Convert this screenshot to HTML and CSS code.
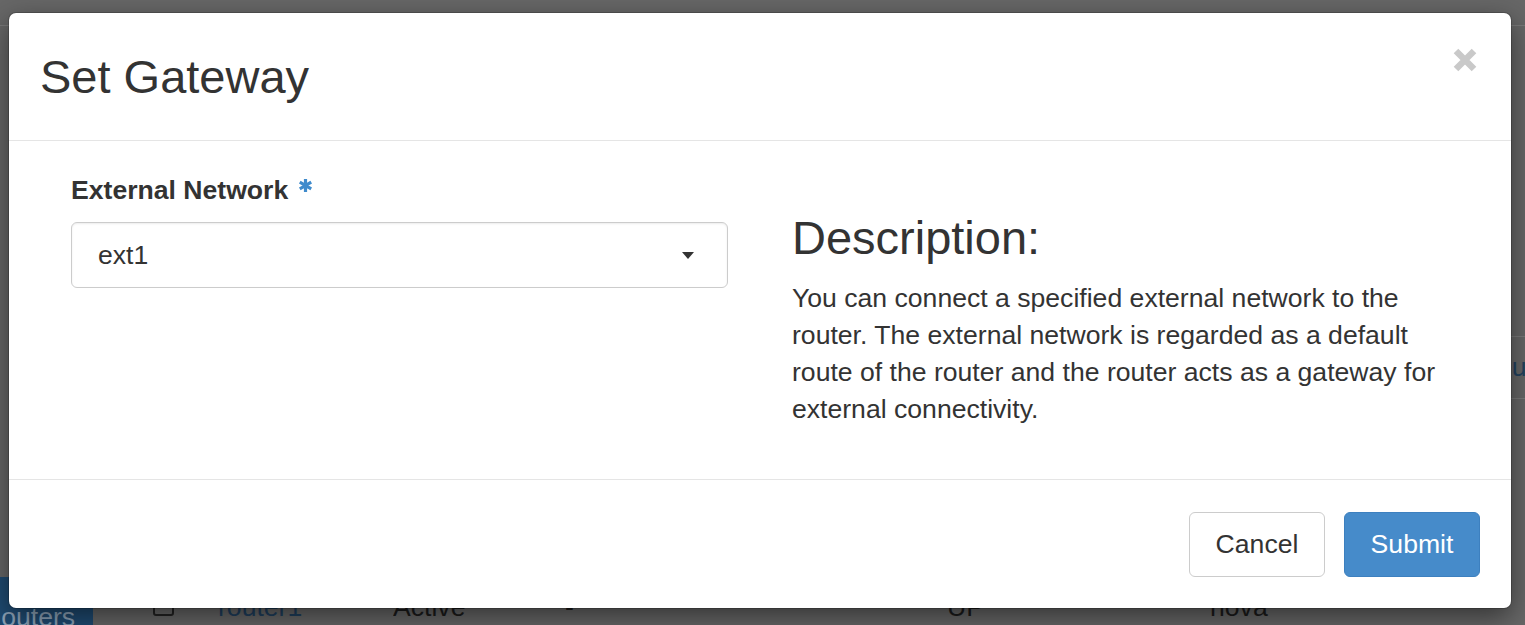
FILE: index.html
```html
<!DOCTYPE html>
<html lang="en">
<head>
<meta charset="utf-8">
<title>Set Gateway</title>
<link rel="stylesheet" href="styles.css">
</head>
<body>
<div class="page">
  <div class="topbar"></div>
  <div class="main">
    <aside class="sidebar">
      <div class="nav-active">Routers</div>
    </aside>
    <section class="content">
      <div class="thead">
        <div></div><div></div><div></div><div></div><div></div><div></div><div class="th-link">Outputs</div>
      </div>
      <div class="trow">
        <div class="cell-check"><span class="checkbox"></span></div>
        <div class="link">router1</div>
        <div>Active</div>
        <div>-</div>
        <div>UP</div>
        <div>nova</div>
        <div></div>
      </div>
    </section>
  </div>
</div>

<div class="modal">
  <div class="modal-header">
    <h3 class="modal-title">Set Gateway</h3>
    <button class="close" aria-label="Close">
      <svg width="26" height="26" viewBox="0 0 26 26"><path d="M4 4 L22 22 M22 4 L4 22" stroke="#c9c9c9" stroke-width="6.5" stroke-linecap="butt" fill="none"/></svg>
    </button>
  </div>
  <div class="modal-body">
    <div class="col">
      <label class="field-label">External Network<svg class="req" width="15" height="15" viewBox="0 0 16 16"><path d="M8 1 V15 M1.9 4.5 L14.1 11.5 M14.1 4.5 L1.9 11.5" stroke="#3f8bcc" stroke-width="3.4" fill="none"/></svg></label>
      <div class="select"><span>ext1</span><span class="caret"></span></div>
    </div>
    <div class="col">
      <h3 class="desc-title">Description:</h3>
      <p class="desc">You can connect a specified external network to the router. The external network is regarded as a default route of the router and the router acts as a gateway for external connectivity.</p>
    </div>
  </div>
  <div class="modal-footer">
    <button class="btn btn-default">Cancel</button>
    <button class="btn btn-primary">Submit</button>
  </div>
</div>
</body>
</html>
```
FILE: styles.css
```css
* { box-sizing: border-box; }
html, body { margin: 0; padding: 0; }
body {
  width: 1525px;
  height: 625px;
  overflow: hidden;
  position: relative;
  background: #676767;
  font-family: "Liberation Sans", Arial, sans-serif;
}

/* dimmed page behind the dialog */
.page { height: 625px; display: flex; flex-direction: column; }
.topbar { height: 26px; border-bottom: 1px solid #7a7a7a; flex: none; }
.main { flex: 1; display: flex; min-height: 0; }
.sidebar { width: 93px; flex: none; display: flex; flex-direction: column; justify-content: flex-end; }
.nav-active {
  height: 48px;
  background: #1f4b72;
  color: #8ea4b9;
  font-size: 26.6px;
  line-height: 37px;
  padding-top: 22px;
  text-indent: -18px;
  white-space: nowrap;
  overflow: hidden;
}
.content { flex: 1; display: flex; flex-direction: column; color: #1b1b1b; font-size: 26.6px; min-width: 0; }
.thead, .trow {
  display: grid;
  grid-template-columns: 125px 175px 172px 382px 263px 281px 1fr;
  white-space: nowrap;
  overflow: hidden;
}
.thead > div, .trow > div { overflow: hidden; }
.thead {
  margin-top: 310px;
  height: 65px;
  border-top: 1px solid #7a7a7a;
  border-bottom: 1px solid #7a7a7a;
  align-items: center;
}
.th-link { color: #23425f; }
.trow { margin-top: 190px; line-height: 37px; }
.cell-check { padding-left: 60px; padding-top: 7px; }
.checkbox { display: block; width: 21px; height: 20px; border: 2px solid #222; border-radius: 3px; }
.link { color: #1f3f5e; }

/* dialog */
.modal {
  position: absolute;
  left: 9px;
  top: 13px;
  width: 1502px;
  background: #fff;
  border-radius: 7px;
  box-shadow: 0 0 0 1px rgba(0,0,0,.18), 0 9px 28px rgba(0,0,0,.5);
  color: #333;
}
.modal-header {
  display: flex;
  justify-content: space-between;
  align-items: flex-start;
  padding: 38px 31px 38px 31px;
  border-bottom: 1px solid #e5e5e5;
}
.modal-title {
  margin: 0;
  font-size: 47px;
  font-weight: normal;
  line-height: 51px;
  color: #333;
}
.close {
  margin: -4px 2px 0 0;
  padding: 0;
  border: 0;
  background: none;
  width: 26px;
  height: 26px;
  line-height: 0;
}
.modal-body {
  display: flex;
  gap: 64px;
  padding: 31px 62px 51px 62px;
}
.col { width: 657px; flex: none; }
.field-label {
  display: block;
  font-size: 26.6px;
  font-weight: bold;
  line-height: 37px;
  margin-bottom: 13px;
}
.req { margin-left: 10px; vertical-align: 6px; }
.select {
  height: 66px;
  border: 1px solid #ccc;
  border-radius: 6px;
  box-shadow: inset 0 1px 2px rgba(0,0,0,.075);
  display: flex;
  align-items: center;
  justify-content: space-between;
  padding: 0 33px 0 26px;
  font-size: 26.6px;
  color: #333;
}
.caret {
  width: 0;
  height: 0;
  border-left: 6px solid transparent;
  border-right: 6px solid transparent;
  border-top: 7px solid #333;
}
.desc-title {
  margin: 40px 0 17px 0;
  font-size: 47px;
  font-weight: normal;
  line-height: 51px;
  color: #333;
}
.desc {
  margin: 0;
  font-size: 26.6px;
  line-height: 37px;
  color: #333;
}
.modal-footer {
  display: flex;
  justify-content: flex-end;
  gap: 19px;
  padding: 32px 31px 31px 31px;
  border-top: 1px solid #e5e5e5;
}
.btn {
  width: 136px;
  height: 65px;
  border-radius: 6px;
  font-family: inherit;
  font-size: 26.6px;
  padding: 0;
  cursor: pointer;
}
.btn-default { background: #fff; border: 1px solid #ccc; color: #333; }
.btn-primary { background: #468bca; border: 1px solid #3d80bf; color: #fff; }
```
